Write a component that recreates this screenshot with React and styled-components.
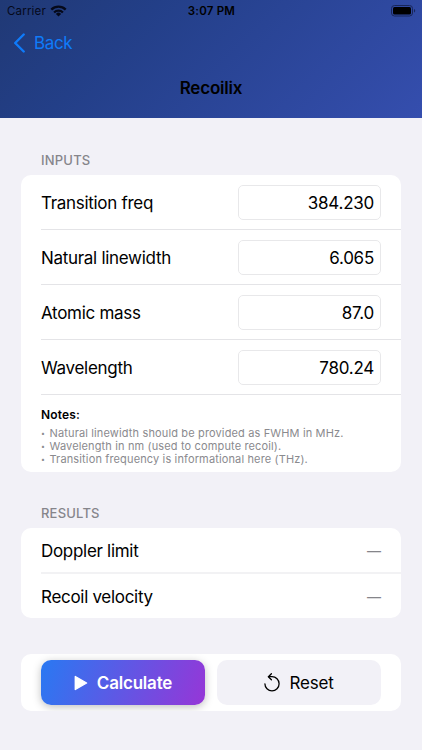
import React, { useState } from "react";
import styled, { createGlobalStyle } from "styled-components";

const GlobalStyle = createGlobalStyle`
  * {
    box-sizing: border-box;
  }

  body {
    margin: 0;
    background: #f2f1f7;
    color: #000;
    font-family: Inter, "Liberation Sans", sans-serif;
    font-size: 17px;
  }
`;

const Screen = styled.div`
  height: 750px;
  overflow: hidden;
`;

const Header = styled.header`
  height: 118px;
  background: linear-gradient(135deg, #203975 0%, #233f88 30%, #354eae 100%);
`;

const StatusBar = styled.div`
  display: grid;
  grid-template-columns: 1fr auto 1fr;
  align-items: center;
  height: 22px;
  padding: 0 6px 0 7px;
  font-size: 11.5px;
`;

const Carrier = styled.div`
  display: flex;
  align-items: center;
  gap: 4px;
  letter-spacing: 0.17px;
  color: #05091a;
`;

const Clock = styled.div`
  font-weight: 600;
  letter-spacing: 0.2px;
`;

const Battery = styled.div`
  display: flex;
  justify-content: flex-end;
`;

const NavBar = styled.nav`
  display: flex;
  height: 42px;
  padding-left: 13px;
`;

const BackButton = styled.button`
  display: flex;
  align-items: center;
  gap: 9px;
  padding: 0;
  border: none;
  background: none;
  color: #0f7bfa;
  font: inherit;
  letter-spacing: -0.35px;
`;

const Title = styled.h1`
  margin: 0;
  padding-top: 13px;
  text-align: center;
  font-size: 17px;
  line-height: 22px;
  font-weight: 600;
  letter-spacing: -0.2px;
`;

const Content = styled.main`
  padding: 34px 21px 0;
`;

const SectionTitle = styled.h2`
  margin: 0;
  padding-left: 20px;
  height: 23px;
  font-size: 13px;
  line-height: 16px;
  font-weight: 500;
  letter-spacing: 0.2px;
  color: #86858b;
`;

const Card = styled.section`
  margin-bottom: ${(props) => props.$gap || 0}px;
  overflow: hidden;
  border-radius: 10px;
  background: #fff;
`;

const Row = styled.label`
  display: flex;
  align-items: center;
  justify-content: space-between;
  height: 55px;
  margin-left: 20px;
  padding-right: 20px;
  border-bottom: 1px solid #e4e4e7;
`;

const ResultRow = styled(Row)`
  height: 46px;
  border-bottom: 2px solid #f2f2f4;

  &:last-child {
    height: 44px;
    border-bottom: none;
  }
`;

const RowLabel = styled.span`
  padding-top: ${(props) => props.$top || 0}px;
  letter-spacing: -0.3px;
`;

const Input = styled.input`
  width: 143px;
  height: 35px;
  padding: 1px 6px 0;
  border: 1px solid #e8e8ea;
  border-radius: 5px;
  outline: none;
  background: #fff;
  color: #000;
  font: inherit;
  letter-spacing: -0.25px;
  text-align: right;
`;

const Dash = styled.span`
  padding-top: 1px;
  color: #85858a;
  font-size: 14px;
`;

const Notes = styled.div`
  height: 76.5px;
  padding: 12px 20px 0;
  font-size: 11px;
  line-height: 13px;
  color: #8a8a8e;
`;

const NotesTitle = styled.div`
  margin-bottom: 5px;
  font-size: 12px;
  line-height: 15px;
  font-weight: 600;
  letter-spacing: 0.15px;
  color: #000;
`;

const Note = styled.div`
  display: flex;
  letter-spacing: 0.14px;

  &::before {
    content: "•";
    width: 8.5px;
    font-size: 7px;
  }
`;

const Actions = styled.div`
  display: flex;
  gap: 12px;
  padding: 6px 20px;
`;

const Button = styled.button`
  display: flex;
  flex: 1;
  align-items: center;
  justify-content: center;
  gap: 9px;
  height: 45px;
  padding: 0;
  border: none;
  border-radius: 10px;
  background: ${(props) =>
    props.$primary ? "linear-gradient(110deg, #2979f2, #9636d7)" : "#f2f1f7"};
  box-shadow: ${(props) =>
    props.$primary ? "0 2px 8px rgba(0, 0, 0, 0.25)" : "none"};
  color: ${(props) => (props.$primary ? "#fff" : "#000")};
  font: inherit;
  font-weight: ${(props) => (props.$primary ? 600 : 400)};
  letter-spacing: -0.2px;
`;

const WifiIcon = () => (
  <svg width="17" height="12" viewBox="0 0 17 12">
    <g fill="none" stroke="#05091a" strokeWidth="2.3">
      <path d="M1.3 4.6a10.2 10.2 0 0 1 14.4 0" />
      <path d="M4.1 7.5a6.2 6.2 0 0 1 8.8 0" />
    </g>
    <path d="M8.5 11.5 5.9 8.9a3.7 3.7 0 0 1 5.2 0z" fill="#05091a" />
  </svg>
);

const BatteryIcon = () => (
  <svg width="25" height="12" viewBox="0 0 25 12">
    <rect x="0.5" y="0.5" width="21" height="10.5" rx="3" fill="none" stroke="#182659" />
    <rect x="2" y="2" width="18" height="7.5" rx="1.5" fill="#000" />
    <path d="M23 4v3.5c.8-.3 1.2-1 1.2-1.75S23.8 4.3 23 4z" fill="#182659" />
  </svg>
);

const BackIcon = () => (
  <svg width="12" height="20" viewBox="0 0 12 20">
    <path
      d="M10.7 1.5 2.2 10l8.500 8.500"
      fill="none"
      stroke="currentColor"
      strokeWidth="2.4"
      strokeLinecap="round"
      strokeLinejoin="round"
    />
  </svg>
);

const PlayIcon = () => (
  <svg width="14" height="16" viewBox="0 0 14 16">
    <path
      d="M1.3 1.5v13L12.6 8z"
      fill="currentColor"
      stroke="currentColor"
      strokeWidth="1.4"
      strokeLinejoin="round"
    />
  </svg>
);

const ResetIcon = () => (
  <svg width="16" height="19" viewBox="0 0 16 19">
    <g
      fill="none"
      stroke="currentColor"
      strokeWidth="1.3"
      strokeLinecap="round"
      strokeLinejoin="round"
    >
      <path d="M.9 10.8A7.1 7.1 0 1 0 8 3.700H4.500" />
      <path d="M7.4.8 4.4 3.700l3 3" />
    </g>
  </svg>
);

const fields = [
  { name: "frequency", label: "Transition freq" },
  { name: "linewidth", label: "Natural linewidth" },
  { name: "mass", label: "Atomic mass" },
  { name: "wavelength", label: "Wavelength" },
];

const initialValues = {
  frequency: "384.230",
  linewidth: "6.065",
  mass: "87.0",
  wavelength: "780.24",
};

const App = () => {
  const [values, setValues] = useState(initialValues);

  const handleChange = (e) => {
    setValues({ ...values, [e.target.name]: e.target.value });
  };

  return (
    <Screen>
      <GlobalStyle />
      <Header>
        <StatusBar>
          <Carrier>
            Carrier
            <WifiIcon />
          </Carrier>
          <Clock>3:07 PM</Clock>
          <Battery>
            <BatteryIcon />
          </Battery>
        </StatusBar>
        <NavBar>
          <BackButton>
            <BackIcon />
            Back
          </BackButton>
        </NavBar>
        <Title>Recoilix</Title>
      </Header>
      <Content>
        <SectionTitle>INPUTS</SectionTitle>
        <Card $gap={33.5}>
          {fields.map(({ name, label }) => (
            <Row key={name}>
              <RowLabel $top={2}>{label}</RowLabel>
              <Input name={name} value={values[name]} onChange={handleChange} />
            </Row>
          ))}
          <Notes>
            <NotesTitle>Notes:</NotesTitle>
            <Note>Natural linewidth should be provided as FWHM in MHz.</Note>
            <Note>Wavelength in nm (used to compute recoil).</Note>
            <Note>Transition frequency is informational here (THz).</Note>
          </Notes>
        </Card>
        <SectionTitle>RESULTS</SectionTitle>
        <Card $gap={36}>
          <ResultRow as="div">
            <RowLabel $top={1}>Doppler limit</RowLabel>
            <Dash>—</Dash>
          </ResultRow>
          <ResultRow as="div">
            <RowLabel $top={1}>Recoil velocity</RowLabel>
            <Dash>—</Dash>
          </ResultRow>
        </Card>
        <Card>
          <Actions>
            <Button $primary>
              <PlayIcon />
              Calculate
            </Button>
            <Button onClick={() => setValues(initialValues)}>
              <ResetIcon />
              Reset
            </Button>
          </Actions>
        </Card>
      </Content>
    </Screen>
  );
};

export default App;
